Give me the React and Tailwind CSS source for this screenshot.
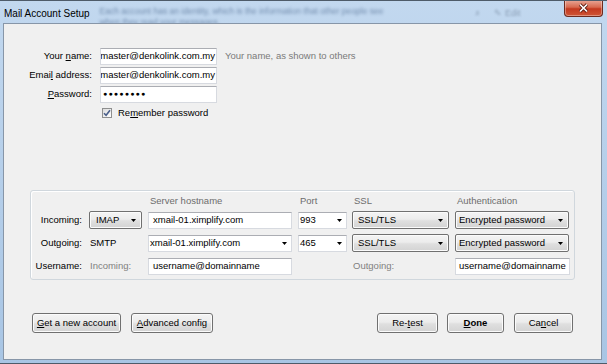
import React from 'react';

// ── Shared bits ───────────────────────────────────────────────────────────────
const ROW = 'grid grid-cols-[58px_59px_150px_54px_103px_115px] items-center';

function Arrow() {
  return (
    <svg width="5" height="3" viewBox="0 0 5 3" className="shrink-0">
      <path d="M0 0H5L2.5 3Z" fill="#000" />
    </svg>
  );
}

function TextBox({ className = '', children }) {
  return (
    <div className={`h-[17px] bg-white border border-[#d7dae0] border-t-[#abadb3] flex items-center overflow-hidden whitespace-nowrap ${className}`}>
      {children}
    </div>
  );
}

function Combo({ className = '', children }) {
  return (
    <div className={`h-[17px] bg-white border border-[#d7dae0] border-t-[#abadb3] flex items-center justify-between pr-[4px] whitespace-nowrap ${className}`}>
      <span>{children}</span>
      <Arrow />
    </div>
  );
}

function DropButton({ className = '', children }) {
  return (
    <div className={`h-[18px] rounded-[2px] border border-[#707070] bg-[linear-gradient(#f4f4f4,#ececec_45%,#dfdfdf_55%,#d3d3d3)] shadow-[inset_0_0_0_1px_#fbfbfb] flex items-center justify-between pr-[5px] whitespace-nowrap ${className}`}>
      <span>{children}</span>
      <Arrow />
    </div>
  );
}

function Button({ className = '', children }) {
  return (
    <div className={`h-[20px] rounded-[3px] border border-[#707070] bg-[linear-gradient(#f4f4f4,#ececec_45%,#dfdfdf_55%,#d3d3d3)] shadow-[inset_0_0_0_1px_#fbfbfb] flex items-center justify-center whitespace-nowrap ${className}`}>
      {children}
    </div>
  );
}

const U = ({ children }) => <span className="underline underline-offset-[1px]">{children}</span>;

// ── Main ──────────────────────────────────────────────────────────────────────
export default function App() {
  return (
    <div className="w-[607px] h-[364px] overflow-hidden flex flex-col bg-linear-to-b from-[#c2d8ef] to-[#a8c5e4] font-['Liberation_Sans',Arial,sans-serif] text-[9.5px] text-black">
      {/* ── Title bar ── */}
      <div className="h-[23px] shrink-0 flex items-start border-t border-[#4e5b69] overflow-hidden">
        <div className="pl-[4px] pt-[7px] text-[10px] leading-[12px] whitespace-nowrap">Mail Account Setup</div>
        <div className="ml-[10px] pt-[5px] text-[8.5px] leading-[11px] text-[#1c3a66] opacity-50 blur-[1.4px] whitespace-nowrap">
          <div>Each account has an identity, which is the information that other people see</div>
          <div>when they read your messages.</div>
        </div>
        <div className="ml-[92px] pt-[6px] flex gap-[14px] opacity-40 blur-[1.2px] text-[#3a4a60] text-[9px]">
          <span>⌕</span>
          <span>✎ Edit</span>
        </div>
        <div className="ml-auto mr-[4px] -mt-px w-[39px] h-[17px] rounded-b-[4px] border border-t-0 border-[#6d2a1e] bg-[linear-gradient(#eaa999,#d8694f_45%,#c4391f_55%,#cf5535)] shadow-[inset_0_0_0_1px_rgba(255,255,255,0.35)] flex items-center justify-center">
          <svg width="11" height="10" viewBox="0 0 11 10">
            <path d="M2 1.5L9 8.5M9 1.5L2 8.5" stroke="#5a1a10" strokeWidth="3.2" />
            <path d="M2 1.5L9 8.5M9 1.5L2 8.5" stroke="#fff" strokeWidth="1.7" />
          </svg>
        </div>
      </div>

      {/* ── Client area ── */}
      <div className="w-[599px] h-[337px] shrink-0 ml-[3px] border border-[#8796a8] bg-[#f0f0f0] flex flex-col">
        {/* identity */}
        <div className="pt-[24px] grid grid-cols-[88px_117px_auto] gap-x-[8px] gap-y-[2px] auto-rows-[17px] items-center">
          <div className="text-right">Your <U>n</U>ame:</div>
          <TextBox className="justify-end pr-[1px]">master@denkolink.com.my</TextBox>
          <div className="text-[#7a7a7a]">Your name, as shown to others</div>

          <div className="text-right">Emai<U>l</U> address:</div>
          <TextBox className="justify-end pr-[1px]">master@denkolink.com.my</TextBox>
          <div />

          <div className="text-right"><U>P</U>assword:</div>
          <TextBox className="pl-[2px]">
            <span className="text-[7px] tracking-[1.2px]">●●●●●●●●</span>
          </TextBox>
          <div />
        </div>

        <div className="mt-[3px] h-[14px] pl-[98px] flex items-center gap-[6px]">
          <div className="w-[10px] h-[10px] border border-[#8e8f8f] bg-linear-to-br from-[#dcdcdc] to-white flex items-center justify-center">
            <svg width="8" height="8" viewBox="0 0 8 8">
              <path d="M1 4.2L3.1 6.3L7 1.3" fill="none" stroke="#4a5f8a" strokeWidth="1.6" />
            </svg>
          </div>
          <span>Re<U>m</U>ember password</span>
        </div>

        {/* ── Server settings ── */}
        <div className="mt-[70px] ml-[26px] w-[545px] h-[90px] rounded-[3px] border border-[#d0d7dd] shadow-[inset_1px_1px_0_#fff] pt-[3px] flex flex-col">
          <div className={`${ROW} h-[14px] text-[#6d6d6d]`}>
            <div />
            <div />
            <div className="pl-[2px]">Server hostname</div>
            <div className="pl-[2px]">Port</div>
            <div className="pl-[2px]">SSL</div>
            <div className="pl-[2px]">Authentication</div>
          </div>

          <div className={`${ROW} h-[18px] mt-[3px]`}>
            <div className="text-right pr-[7px]">Incoming:</div>
            <DropButton className="w-[53px] pl-[6px]">IMAP</DropButton>
            <TextBox className="w-[144px] pl-[4px]">xmail-01.ximplify.com</TextBox>
            <Combo className="w-[49px] pl-[1px]">993</Combo>
            <DropButton className="w-[97px] pl-[5px]">SSL/TLS</DropButton>
            <DropButton className="w-[114px] pl-[3px]">Encrypted password</DropButton>
          </div>

          <div className={`${ROW} h-[18px] mt-[5px]`}>
            <div className="text-right pr-[7px]">Outgoing:</div>
            <div className="pl-[1px]">SMTP</div>
            <Combo className="w-[144px] pl-[1px]">xmail-01.ximplify.com</Combo>
            <Combo className="w-[49px] pl-[1px]">465</Combo>
            <DropButton className="w-[97px] pl-[5px]">SSL/TLS</DropButton>
            <DropButton className="w-[114px] pl-[3px]">Encrypted password</DropButton>
          </div>

          <div className={`${ROW} h-[18px] mt-[5px]`}>
            <div className="text-right pr-[7px]">Username:</div>
            <div className="pl-[1px] text-[#808080]">Incoming:</div>
            <TextBox className="w-[144px] pl-[4px]">username@domainname</TextBox>
            <div />
            <div className="pl-[1px] text-[#808080]">Outgoing:</div>
            <TextBox className="w-[115px] pl-[3px]">username@domainname</TextBox>
          </div>
        </div>

        {/* ── Buttons ── */}
        <div className="mt-[33px] pl-[28px] flex">
          <Button className="w-[89px]"><U>G</U>et a new account</Button>
          <Button className="w-[82px] ml-[10px]"><U>A</U>dvanced config</Button>
          <Button className="w-[61px] ml-[164px]">Re-<U>t</U>est</Button>
          <Button className="w-[57px] ml-[9px] font-bold"><U>D</U>one</Button>
          <Button className="w-[59px] ml-[10px]">Ca<U>n</U>cel</Button>
        </div>
      </div>

      {/* bottom frame */}
      <div className="flex-1 border-b border-[#4e5b69]" />
    </div>
  );
}
